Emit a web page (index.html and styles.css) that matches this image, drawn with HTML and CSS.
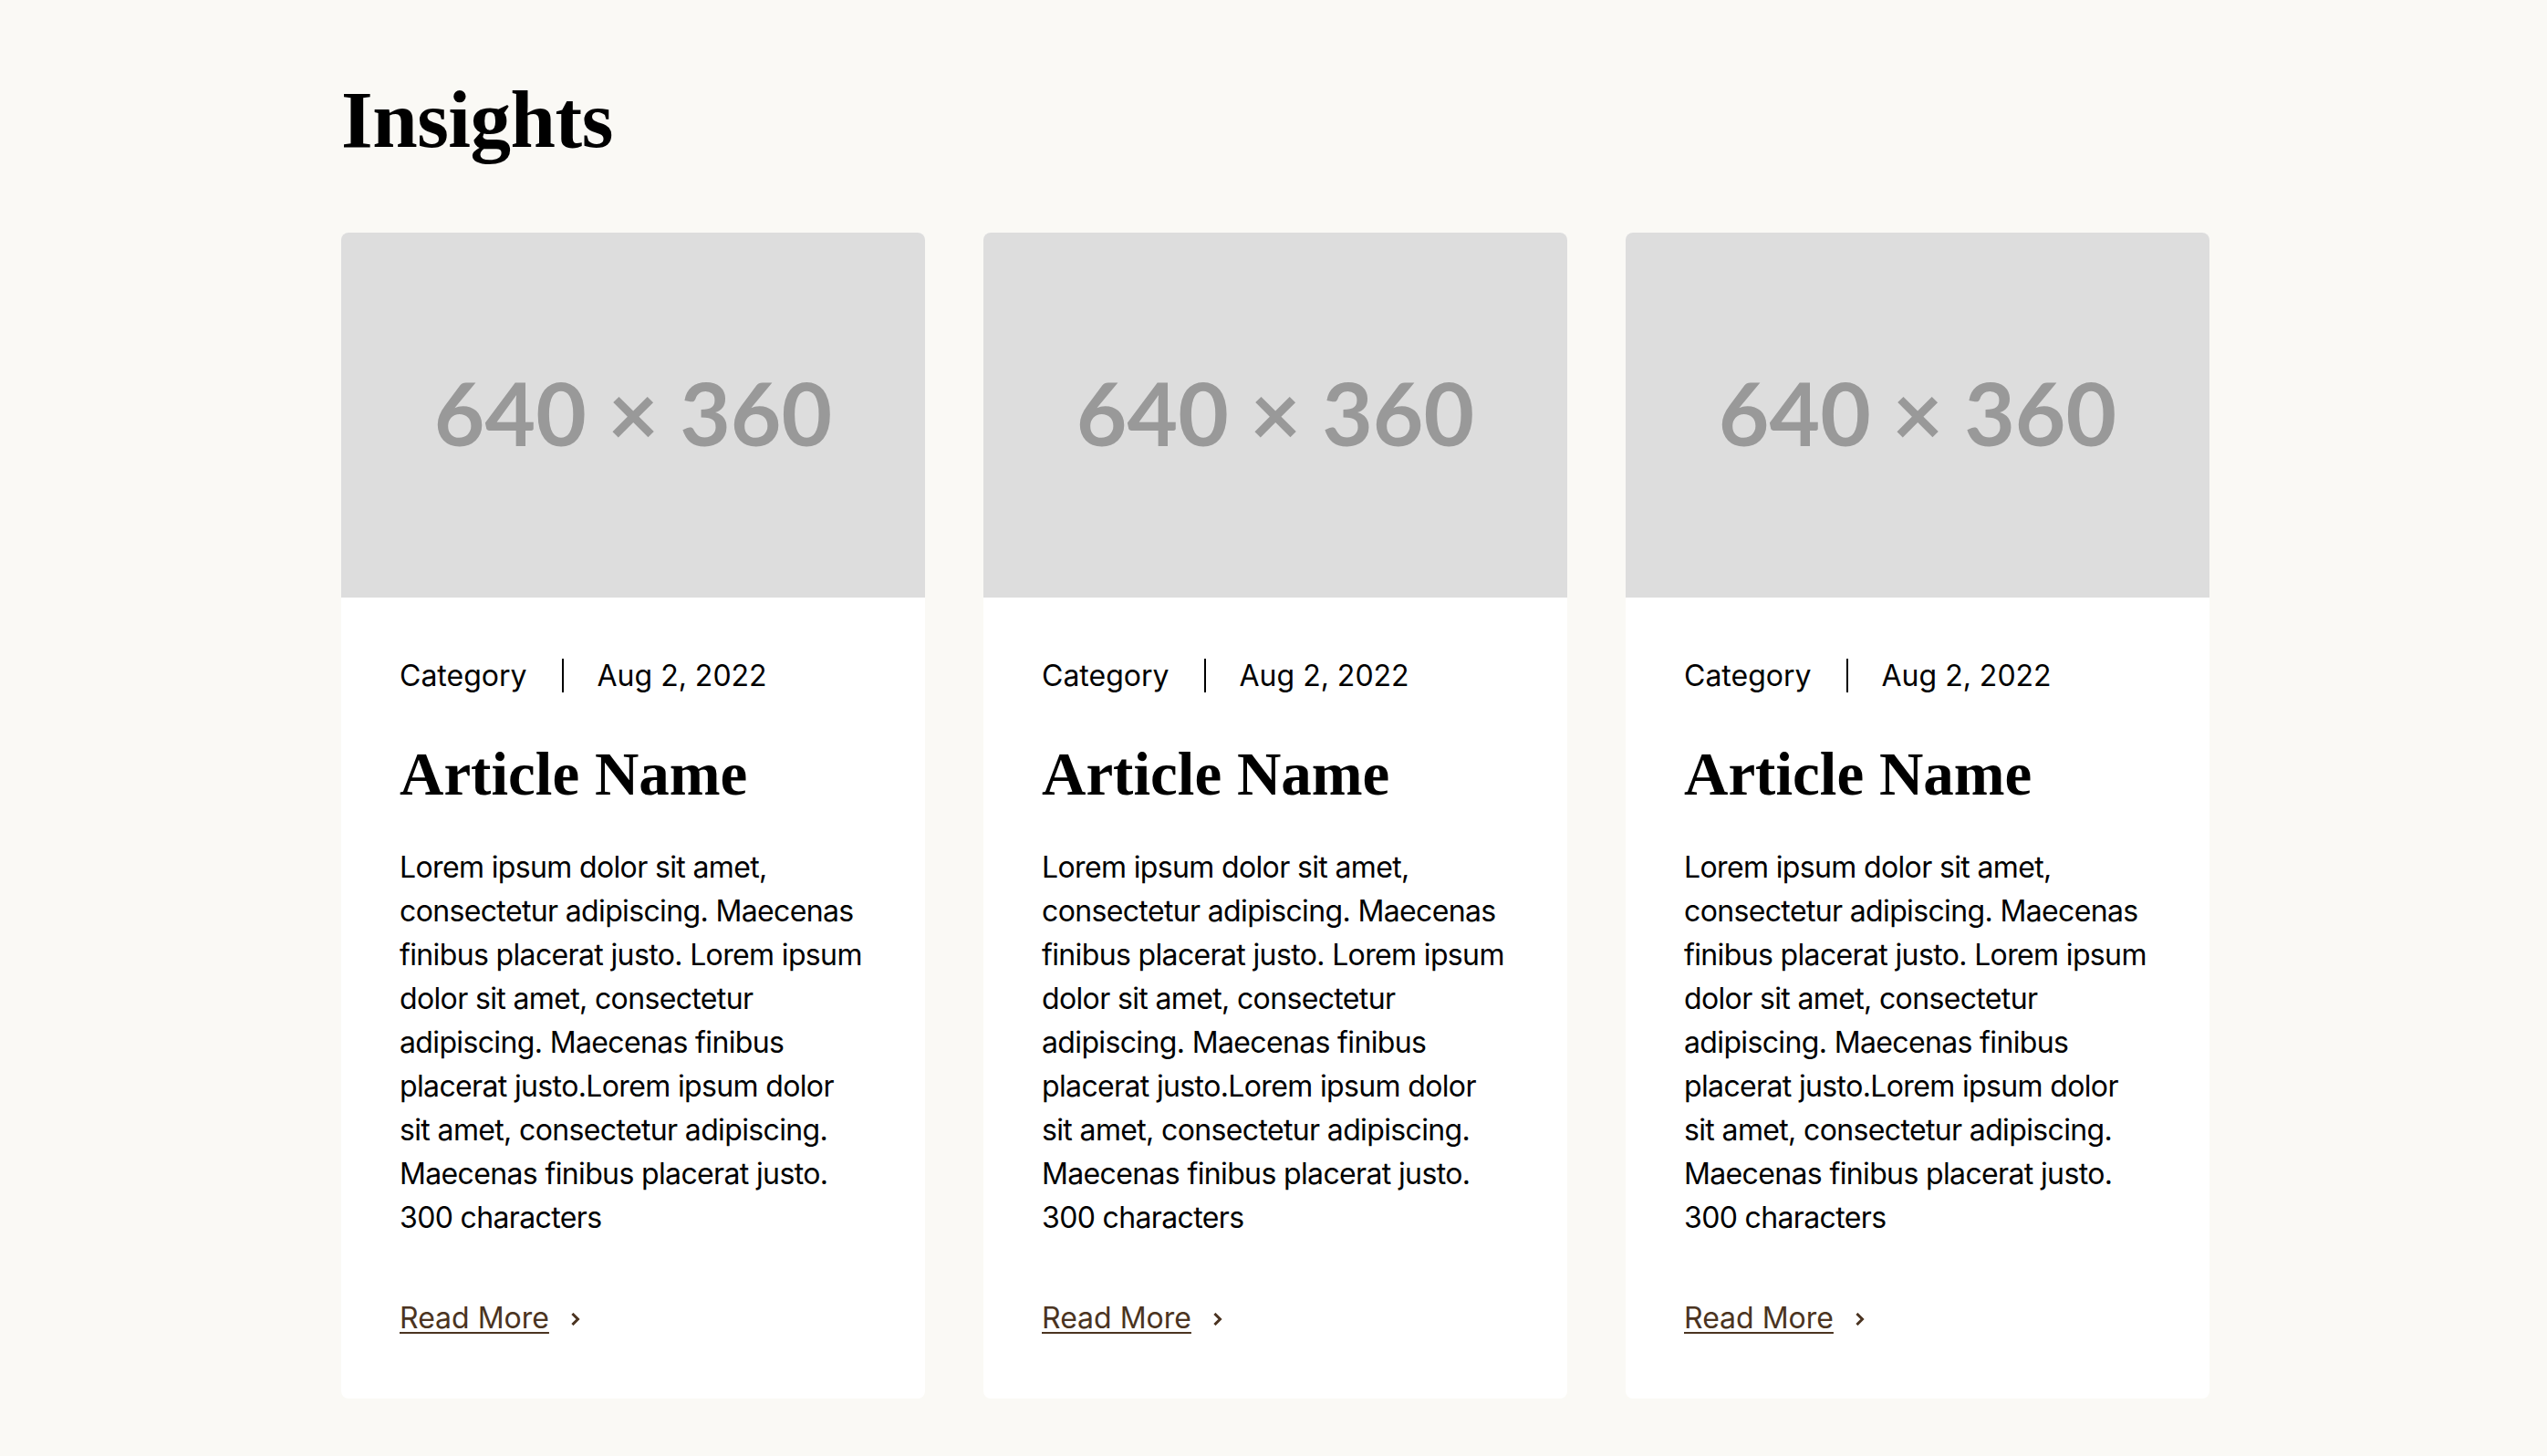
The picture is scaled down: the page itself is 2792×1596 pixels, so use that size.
FILE: index.html
```html
<!DOCTYPE html>
<html lang="en">
<head>
<meta charset="utf-8">
<title>Insights</title>
<link rel="stylesheet" href="styles.css">
</head>
<body>
<section class="insights">
  <h1 class="insights-title">Insights</h1>
  <div class="cards">
    <article class="card">
      <div class="card-image"><span>640 × 360</span></div>
      <div class="card-body">
        <div class="meta"><span class="meta-cat">Category</span><span class="meta-sep"></span><span class="meta-date">Aug 2, 2022</span></div>
        <h2 class="card-title">Article Name</h2>
        <p class="card-text">Lorem ipsum dolor sit amet, consectetur adipiscing. Maecenas finibus placerat justo. Lorem ipsum dolor sit amet, consectetur adipiscing. Maecenas finibus placerat justo.Lorem ipsum dolor sit amet, consectetur adipiscing. Maecenas finibus placerat justo. 300 characters</p>
        <a class="read-more" href="#"><span class="read-more-label">Read More</span><svg class="chev" width="10" height="14" viewBox="0 0 10 14"><path d="M2.5 2 L7.5 7 L2.5 12" fill="none" stroke="currentColor" stroke-width="3" stroke-linecap="square"/></svg></a>
      </div>
    </article>
    <article class="card">
      <div class="card-image"><span>640 × 360</span></div>
      <div class="card-body">
        <div class="meta"><span class="meta-cat">Category</span><span class="meta-sep"></span><span class="meta-date">Aug 2, 2022</span></div>
        <h2 class="card-title">Article Name</h2>
        <p class="card-text">Lorem ipsum dolor sit amet, consectetur adipiscing. Maecenas finibus placerat justo. Lorem ipsum dolor sit amet, consectetur adipiscing. Maecenas finibus placerat justo.Lorem ipsum dolor sit amet, consectetur adipiscing. Maecenas finibus placerat justo. 300 characters</p>
        <a class="read-more" href="#"><span class="read-more-label">Read More</span><svg class="chev" width="10" height="14" viewBox="0 0 10 14"><path d="M2.5 2 L7.5 7 L2.5 12" fill="none" stroke="currentColor" stroke-width="3" stroke-linecap="square"/></svg></a>
      </div>
    </article>
    <article class="card">
      <div class="card-image"><span>640 × 360</span></div>
      <div class="card-body">
        <div class="meta"><span class="meta-cat">Category</span><span class="meta-sep"></span><span class="meta-date">Aug 2, 2022</span></div>
        <h2 class="card-title">Article Name</h2>
        <p class="card-text">Lorem ipsum dolor sit amet, consectetur adipiscing. Maecenas finibus placerat justo. Lorem ipsum dolor sit amet, consectetur adipiscing. Maecenas finibus placerat justo.Lorem ipsum dolor sit amet, consectetur adipiscing. Maecenas finibus placerat justo. 300 characters</p>
        <a class="read-more" href="#"><span class="read-more-label">Read More</span><svg class="chev" width="10" height="14" viewBox="0 0 10 14"><path d="M2.5 2 L7.5 7 L2.5 12" fill="none" stroke="currentColor" stroke-width="3" stroke-linecap="square"/></svg></a>
      </div>
    </article>
  </div>
</section>
</body>
</html>
```
FILE: styles.css
```css
html, body {
  margin: 0;
  padding: 0;
}
body {
  background: #faf9f5;
  color: #000;
  font-family: Inter, "Noto Sans", "Liberation Sans", sans-serif;
}
.insights {
  width: 2048px;
  margin: 0 auto;
  padding: 78px 0 40px 4px;
}
.insights-title {
  margin: 0 0 70px;
  font-family: "Liberation Serif", "DejaVu Serif", serif;
  font-weight: 700;
  font-size: 89px;
  line-height: 1.2;
  letter-spacing: -0.5px;
}
.cards {
  display: grid;
  grid-template-columns: repeat(3, 640px);
  column-gap: 64px;
}
.card {
  background: #fff;
  border-radius: 8px;
  overflow: hidden;
  display: flex;
  flex-direction: column;
}
.card-image {
  height: 400px;
  background: #dddddd;
  display: flex;
  align-items: center;
  justify-content: center;
  color: #999999;
  font-family: Lato, "Open Sans", sans-serif;
  font-weight: 700;
  font-size: 96px;
  line-height: 1;
}
.card-image span {
  padding-bottom: 6px;
}
.card-body {
  padding: 62px 64px 64px;
  display: flex;
  flex-direction: column;
  align-items: flex-start;
}
.meta {
  display: flex;
  align-items: center;
  font-size: 32px;
  line-height: 48px;
  margin-bottom: 43px;
}
.meta-sep {
  width: 2px;
  height: 37px;
  background: #000;
  margin: 0 37px 0 38px;
}
.card-title {
  margin: 0 0 39px;
  font-family: "Liberation Serif", "DejaVu Serif", serif;
  font-weight: 700;
  font-size: 67px;
  line-height: 80px;
}
.card-text {
  margin: 0;
  font-size: 32px;
  line-height: 48px;
  letter-spacing: -0.02em;
}
.read-more {
  margin-top: 62px;
  display: flex;
  align-items: center;
  gap: 24px;
  color: #4b3421;
  text-decoration: none;
  font-size: 32px;
  line-height: 48px;
}
.read-more-label {
  text-decoration: underline;
  text-decoration-thickness: 2px;
  text-underline-offset: 4px;
}
.chev {
  display: block;
  margin-top: 2px;
}
```
